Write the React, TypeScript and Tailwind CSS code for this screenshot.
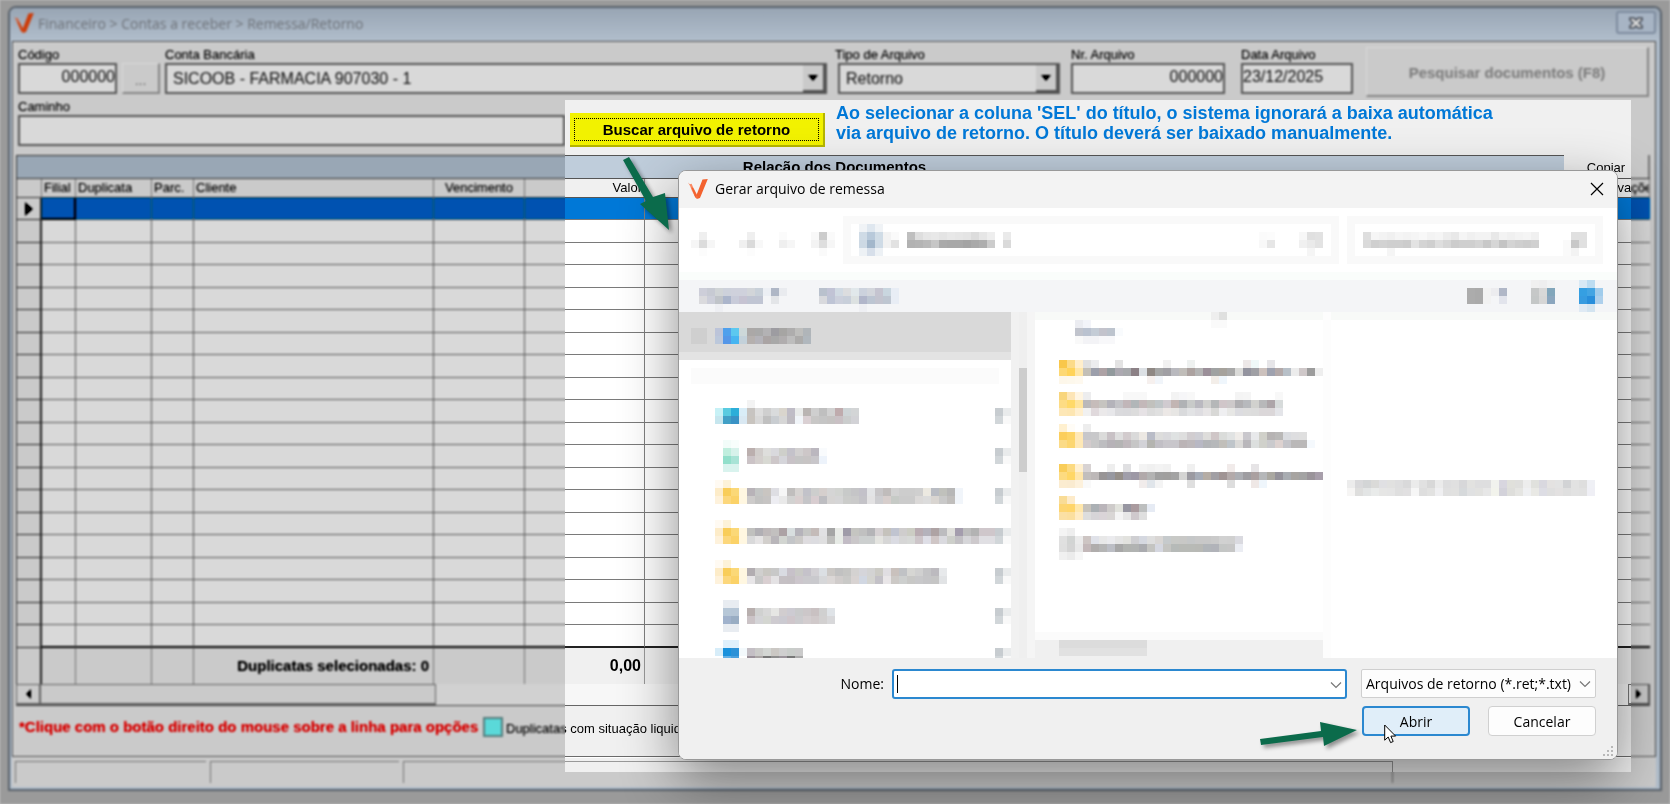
import React from "react";

const UI = "font-['Liberation_Sans',Arial,sans-serif]";
const SEGOE = "font-['Open_Sans','Noto_Sans',sans-serif]";

/* Grid of 8px blocks; "." leaves a block empty. */
function Mosaic({ rows, className = "" }: { rows: string[]; className?: string }) {
  const cells = rows.map((r) => r.split(" "));
  const cols = Math.max(...cells.map((r) => r.length));
  return (
    <svg
      width={cols * 8}
      height={rows.length * 8}
      shapeRendering="crispEdges"
      className={"block shrink-0 " + className}
      aria-hidden="true"
    >
      {cells.map((r, y) =>
        r.map((c, x) =>
          c === "." ? null : <rect key={x + "-" + y} x={x * 8} y={y * 8} width="8" height="8" fill={"#" + c} />
        )
      )}
    </svg>
  );
}

const FOLDER = ["fffaf2 fdf2d8 . .", "fdecc9 f9cd59 fbd877 fff7e1", "fef2dc fcd77c fbd268 fff7e1", ". . . ."];

const SIDE_ITEMS: string[][] = [
  [
    ". . . . f3f3f3",
    "c7f1f6 59cbe0 2caed9 d9edf7 c7c4c1 dddddd cfcfcf d9dbdc d9d5cd bfbcc6 e9ebea b9b4b2 cfcfcf bfbfbf d1d1d1 bfabad ced4d6 d3d5d6",
    "c6e6ee 41a0c6 3a92c5 d9e8f2 c8c4bf d8d8d8 c0c0c0 c9cdd1 d6d6d6 bfbcc2 f1f5f9 dad0d3 c8c7c6 c5c5c5 c5c3c2 c9c0c4 cbcdcd d2d2d6",
    ".",
  ],
  [
    ". f2fcf9 f8fefc",
    ". c0eede d7f2eb . bbafae d1cdcb dededc d9d9dd cecfca c4c2ca d2d0d0 cdc7c8 bbb7bf f9fbfd",
    ". 92dfcb a8e3d6 . cbc3c6 d4cfcd d8d9d3 cdc7c9 d5d5da c8c2c7 c5c5c5 c7c4c4 c8c6ca edf3fb",
    ". d9f3ee d9f3ee",
  ],
  [
    FOLDER[0],
    FOLDER[1] + " b8b3b8 c3c5c4 c9c5c1 dedee3 f6f6f6 c0bebd d6d3d1 c2c2c9 cdcecd d5cfcd d5d5d5 d2d4d1 c8cac9 c5c5c7 c3c1c9 e3e4e6 c8c6c8 c0bcbb d2d2d2 cdcdcd cdcdcd cfcfcf ece9e1 b9bcc3 c0c1bc b7b7b7 f1f5fa",
    FOLDER[2] + " cdcbca c2c2c1 c6c4c3 ededf2 e9e9e9 d2d2d1 d9cfcf c5c5c8 d8cdd0 bdbdc1 d6d4d3 d5d5d6 cbccca cacaca c4c3c8 e3e2e3 cdcdd0 d7cecc c6cac6 cbcbcb cbcbcb dbd9d8 dcdcdc d9d5d1 c9c9c9 c0bebc f1f5fa",
    ".",
  ],
  [
    FOLDER[0],
    FOLDER[1] + " c0c0be b1afb4 bfb9ba c2c0bf aca2a5 d8dedf b5b3ba c5c6c4 c4bbb9 e1e1e3 a5a5a5 e9ebe7 9f9ba8 c5c5c1 c0c0c0 b4b4b7 d6d1d3 c5c2bc c0c4d0 cfcdcd cccdc4 b9acb2 b4b2bb aea3a4 bcbcbf dfdfdb a49dad bdbdbd b3b3b3 cfc7cb cfc7cb",
    FOLDER[2] + " d9d9da e6e4e5 d2cfcc b9b6ba d2d5d1 c3c5c8 cccac8 dedcdf dcdce0 dfdfe0 bfbfbd e7ebe6 c2bcc5 cac7c9 cccfcf cccfcf e4e4e0 d6d6d6 dadbe2 d6d6d6 d7d9d7 cdc5c9 dedee6 cfc6c6 dadadf cdcfca c2c0c4 d6d6d9 cdc9cc e0dfe3 e0dfe3",
    ".",
  ],
  [
    FOLDER[0],
    FOLDER[1] + " b2adb1 d0cfce c9c7c2 c8c8c8 d9dbe2 c7c1c9 c9c9c6 c5c2ca d2d0d4 dbdfe3 cbc8c5 c1c1c1 c5c5c3 d4d2d1 d5d5da d3d3d3 cccbc5 e0dee2 c9c1bd c0c2c5 d6d6d3 d0d0d0 c4c4c6 bcbabf e7e9eb",
    FOLDER[2] + " e8e6e8 c8c8c8 d9cfd1 e4e2e4 c5c0c4 c4bfc3 ccc6cc cac9cd c9c9cd d6d7d9 dbd7d6 d0cccb c9c9c7 d8d3d2 d1d7e2 d4d4d0 c3c1c7 e9e6e8 ccc9c6 cdcfce c8c8c6 c8c8ca c5c5c7 c5c5c5 e1e3e5",
    ".",
  ],
  [
    ". e8ecf1 e8ecf1",
    ". b6c7d7 b6c6d6 . b8afae d0d1d0 d8d8d8 e6e6e4 d1cdcf cdcbd2 c9cacb ccc7c9 c9c1c2 d0d0d0 dfe3e7",
    ". a0b2cc 99adc3 . cbc3c6 d4d4d7 d4d6d1 cecbd0 cbcad1 cfc6cb cbcbce d3cdcf d0c9ca d2d0d0 d8d8da",
    ". e8ecf1 e8ecf1",
  ],
  [
    ". dff0fc dff0fc",
    "d7edf9 1991dc 2c91d7 f3f9fc c4bfc5 cbcbc9 d3d6d3 cbc8c4 cfcfcf c9cdca cbcbcb",
    ". 62b0e6 4aa0de . 999099 aaa5a5 777777 8e8e8e 9b949b 777777 aaaaaa",
    ".",
  ],
];

const PIN = [". .", ". c7ccd0 e9ebec", ". d1d6d9 f9f9f9", "."];

const F1 = ["f9c74a fcdb88 ffeecb", "fdd874 ffd35a ffe6a6", "fdf7ea fdf8ec fef9ef"];
const F2 = ["f8d57c fde5b6 fff5e2", "fddc84 ffd969 ffe49c", "fde7b6 fde6b2 ffefcf"];
const F3 = ["fff0cf fffcf6 .", "fcce5b fdd467 ffe8b6", "fbdb87 fcd671 ffe8b6"];

const FILES: string[][] = [
  [
    F1[0] + " e0e0e0 ececee . . e3e3e3 . . . . . f1f1f1 . . eef1f0 . . . . . . ede8e8 eff8f8 . e6e5e8 . . . . . . e4e0e2 e1e2e6 .",
    F1[1] + " c3bfb7 9c9fab ada2a5 929a9d aca9b1 a7a9ac 8c8186 dce0e4 8f8884 a5a6a6 a09fa4 b9b9be c0bdb9 aca2a0 b4b4b4 9b8f99 a0a2a2 a6a29c a8a8a8 dadad8 94949f a0a0a5 ccc1bd 9fa2af b3a9a9 b8c0c8 ececec cfc8c9 9c9c9c eeeeee",
    F1[2] + " . . . . . . . . f6f0ee f1f5fa . . . . . . f3eee9 eff6fc",
  ],
  [".", F2[0] + " ededee . . . . f8f8f8 f8f8f8 f8f8f8 . . . f3f3f3 f6f6f8 f8f8f8 . . . . . f4f4f4 f5f5f5 . . . f8f8f8",
    F2[1] + " bab8ba c6bcba c6c4c0 b4b3ba c3c3c7 c1b6b9 b1b6b8 c3b8b9 c1c1bd c0c6c8 d0cbd0 c2b5b3 b0b2b5 c8cac9 bab9c0 d0d0ce b5b7b8 d0c6c9 cdc9ca b0afb2 b7b9bd d1d1ce b8b8ba ada5a9 d7dbdb",
    F2[2] + " f1f1f1 e0d9dc ebe9ea e7e7ea dadadd d9d9dc dcdcdc e6e2e5 dcdcdc e0e0e0 ece8e6 e7e6e4 d9dadc e2e3e5 dedde1 e7e5e6 d8d8d6 efeff1 e7e7e5 dcdce0 dddddd dcdcdc dbd7d9 dbd7d9 e4e5e9"],
  [".", F3[0] + " ededed",
    F3[1] + " c7c7ca c8c8ca dbdbda c8c1c5 dedede d2cbcd dadada ece8e3 b9bcc7 dddddc dadadd dfe2e2 dedede d1cdd0 cfcfd5 dedddb cfc6c7 dadcda e1e3e3 efece9 c9c7cc e8e9eb d0d0c9 b6b3b3 b9b8b7 dadce0 dedee0 dfdfdf",
    F3[2] + " d3cbcc c8c8c8 bdbdc0 b6b2b7 b4b4b4 bfb8bc c6c6c6 d2d2d7 b4b4b0 c1bfc5 c8c6cb c8c6cb bbb4b6 bdb8bb b8b8c4 b3b5b8 b6b8ba c1bfba bfc5ca dbdad8 b9b7bb dcdfde d0d1cb cacacd ddd2d0 c5c5ca bab8b8 bab8b8 f5f9fd"],
  [".", ".",
    "f9cd59 fcda80 fff0d0 d8d3d3 . . eeeeee . e0e0e2 . f3f3f3 f0f0f0 f3f3f3 f1f1f1 . . f0f0f0 . . . . f1ebea . . e6e4e6 . . . . . . . . e7e0e2",
    "fddb80 ffd766 ffe6aa c2bebc bdb8b8 989596 9798a0 958f89 a09eaa 9d98a5 b1a9aa b3b3b3 a0a0a0 a09f9e a3a3a3 d4d4d3 9b9aa1 a6acb7 b5ada5 a19fa4 a09494 b3aaaa acaeb3 9e9da1 aaa0a0 b5b7b9 aaa8a1 94929a a8acb1 a7a4a1 a3a3a3 9a949a a79eaa ebf7fb",
    "fbecd0 faebd0 fdf1dc f9f9f9 . . . . . . f1eceb e0e5ea f4f4f4 . . . dfdfdf . . . . dddddd . . efe8e6 eff6fc"],
  [".",
    "f9dc96 fdebca .",
    "fdd571 ffd56a ffe7ab c6c2bb abb0b4 bab5ba cecbca e1e2dc 9796a1 aa9b9f bdbfbf e6ebf4",
    "fbe0a4 fbdf9f ffebc3 dddddd d7d5d8 dad4d8 d9d6d5 f4f4f4 e7e7e7 cfc9cd dfdfdf"],
  [".",
    "f4f4f4 eeeeee .",
    "e0e0e0 d2d4d3 ebebeb cdc5c3 e0e2e9 e8e8e8 ebebee e5e5e5 e2e2de cfcfd2 d5d8e0 dedede d9d6d4 c6cacc c8c9c6 c8c8c6 c5c7c8 c8c8c8 c8c8c8 cacaca d1d1d1 d0d0d0 dadae0",
    "dfdfdf d4d4d4 e8e8e8 c3b8b9 b0adac b5b5b5 bcbec5 a7a7a7 b1b3b0 b1b3b2 aaabaf c4c4c1 d5d7e0 c5c5c2 b6bab8 b8bab6 b8bab6 b8b9b5 b1b5b9 b1b3b9 c4c6c5 c6c6c6 ebedf3",
    "f0f0f0 ebebeb f6f6f6"],
];

const PREVIEW = [
  "ececec d9d9db d3d5d6 dadad8 e0e0e3 e1e1e0 dededf d9d9da ebebeb e1e1e1 d8d8d8 ebebeb dededf e0e0e0 d7d7d9 e2e2e0 dededf dededf f1f2ee d8d6df e0e0db dfdfdd ededed e0e1dd d9d8df e4e2e1 e3e3e3 d2d3d5 e2e2e2 dedede eff0f5",
  "f6f5f4 dededd e3e5e5 e9ebea e6e6e5 e5e5e5 dfdfdf e1e0e1 f6f6f6 dedede e2e2e1 efeff1 e0e0e0 e1e1e0 d6d9db e0e1e2 e2e2e0 e7e7e7 f2f3ec d3d2da dededb e5e5e2 eff0f2 e9e9e5 dddde4 dfdfdf e3e1e1 dfdfdf e2e2e2 e1e1e1 efeff5",
];

function Logo({ className = "" }: { className?: string }) {
  return (
    <svg viewBox="0 0 20 20" width="20" height="20" className={"shrink-0 " + className} aria-hidden="true">
      <path d="M14.5 .6 19.8 0 12.2 18.6C11.6 19.8 8.6 20.4 7.6 18.8L6.6 16.6 8.8 15.2Z" fill="#f3622f" />
      <path d="M0 3.4 1.8 5.2 3.6 4.8 5 8 8.8 15.2 9.4 18.4 7.2 18.2 3.6 11 2.2 7.2Z" fill="#f98a64" />
      <path d="M3.4 8.4 5 8.8 9 16.4 8.2 18.8 6.8 17.2Z" fill="#f3622f" />
    </svg>
  );
}

function Label({ htmlFor, children }: { htmlFor: string; children: React.ReactNode }) {
  return (
    <label htmlFor={htmlFor} className="block h-4 whitespace-nowrap text-[13px] leading-4">
      {children}
    </label>
  );
}

function Combo({ id, value }: { id: string; value: string }) {
  return (
    <div className="relative h-[31px] border-2 border-[#7a7a7a] bg-white">
      <select id={id} className="h-full w-full appearance-none bg-transparent pl-1.5 text-base text-[#333] outline-none">
        <option>{value}</option>
      </select>
      <span className="pointer-events-none absolute inset-y-0 right-0 flex w-[22px] items-center justify-center border-b-2 border-r-2 border-[#777] bg-[#f0f0f0]">
        <svg width="10" height="6" aria-hidden="true">
          <path d="M0 0H10L5 6Z" fill="#000" />
        </svg>
      </span>
    </div>
  );
}

const INPUT = "block h-[31px] w-full min-w-0 border-2 border-[#7a7a7a] bg-white text-base text-[#333] outline-none";

function Chevron({ className = "" }: { className?: string }) {
  return (
    <svg width="12" height="8" viewBox="0 0 12 8" className={className} aria-hidden="true">
      <path d="M1 1.5 6 6.5 11 1.5" fill="none" stroke="#777" strokeWidth="1.2" />
    </svg>
  );
}

const ROWS = Array.from({ length: 20 }, (_, i) => i);
const DATA_COLS = [0, 1, 2, 3, 4, 5, 6, 7];

function DocumentGrid() {
  const base =
    "h-[19px] overflow-hidden whitespace-nowrap border-b border-r border-b-[#555] border-r-[#999] px-[2px] text-[13px] font-normal leading-[18px] ";
  const th = base + "text-left";
  return (
    <table className="w-full table-fixed border-separate border-spacing-0 border-l border-[#555]">
      <colgroup>
        <col className="w-[25px]" />
        <col className="w-[34px]" />
        <col className="w-[76px]" />
        <col className="w-[42px]" />
        <col className="w-[240px]" />
        <col className="w-[91px]" />
        <col className="w-[120px]" />
        <col />
        <col className="w-[70px]" />
      </colgroup>
      <thead>
        <tr>
          <th className={th} />
          <th className={th}>Filial</th>
          <th className={th}>Duplicata</th>
          <th className={th}>Parc.</th>
          <th className={th}>Cliente</th>
          <th className={base + "text-center"}>Vencimento</th>
          <th className={base + "text-right"}>Valor</th>
          <th className={th} />
          <th className={th}>Observações</th>
        </tr>
      </thead>
      <tbody>
        {ROWS.map((r) => (
          <tr key={r} className={r % 2 ? "h-[23px]" : "h-[22px]"}>
            <td className="border-b border-r-2 border-[#444] bg-[#f0f0f0] p-0">
              {r === 0 && (
                <svg width="8" height="14" className="mx-auto block" aria-label="Linha atual">
                  <path d="M0 0 8 7 0 14Z" fill="#000" />
                </svg>
              )}
            </td>
            {DATA_COLS.map((c) => (
              <td
                key={c}
                className={
                  "p-0 " +
                  (r === 0 && c === 0
                    ? "border-b-2 border-r-2 border-[#111] bg-[#0078d7]"
                    : (c < 6 ? "border-r border-r-[#808080] " : "") +
                      (r === 19 ? "border-b-2 border-b-[#222] " : "border-b border-b-[#7a7a7a] ") +
                      (r === 0 ? "bg-[#0078d7]" : "bg-white"))
                }
              />
            ))}
          </tr>
        ))}
      </tbody>
      <tfoot>
        <tr className="h-9 text-[15px] font-bold">
          <td className="border-r-2 border-[#444] p-0" />
          <td className="border-r border-[#999]" />
          <td className="border-r border-[#999]" />
          <td className="border-r border-[#999]" />
          <td className="whitespace-nowrap border-r border-[#999] p-0 pr-1 text-right">Duplicatas selecionadas: 0</td>
          <td className="border-r border-[#999]" />
          <td className="border-r border-[#999] p-0 pr-[3px] text-right text-base">0,00</td>
          <td />
          <td />
        </tr>
      </tfoot>
    </table>
  );
}

function MainWindow() {
  return (
    <div className="flex flex-col rounded-t-lg border-2 border-[#7d8690] bg-[#d7e4f2] pb-[2px] pl-[2px] pr-1">
      <header className="-ml-[2px] -mr-1 flex h-[33px] items-center gap-1 rounded-t-md bg-linear-to-b from-[#becbda] to-[#d7e4f2] pl-1 pr-1">
        <Logo className="-mt-1" />
        <h1 className={"min-w-0 flex-1 truncate pb-0.5 text-[14px] font-medium text-[#93989f] " + SEGOE}>
          Financeiro &gt; Contas a receber &gt; Remessa/Retorno
        </h1>
        <button
          type="button"
          aria-label="Fechar janela"
          className="-mt-1 flex h-[23px] w-10 items-center justify-center rounded-[3px] border-2 border-[#a3b1c4] bg-[#cddaea]"
        >
          <svg width="14" height="12" viewBox="0 0 14 12" aria-hidden="true">
            <path d="M1 1H5L7 3 9 1H13V3L10 6 13 9V11H9L7 9 5 11H1V9L4 6 1 3Z" fill="#fff" stroke="#6b717c" strokeWidth="1.6" />
          </svg>
        </button>
      </header>

      <main className="border border-[#6b6b6b] bg-[#f0f0f0] pl-[3px] pr-[5px] shadow-[inset_1px_1px_0_#fff]">
        <form className="flex pl-[2px] pr-px pt-[5px]" onSubmit={(e) => e.preventDefault()}>
          <div className="w-[99px]">
            <Label htmlFor="codigo">Código</Label>
            <input id="codigo" className={INPUT + " pb-1 text-right"} defaultValue="000000" />
          </div>
          <button type="button" className="ml-[5px] mt-4 h-[31px] w-[38px] border border-b-2 border-r-2 border-[#fff] border-b-[#aaa] border-r-[#aaa] pt-1 text-sm text-[#888]">
            ...
          </button>
          <div className="ml-[5px] min-w-0 flex-1">
            <Label htmlFor="conta">Conta Bancária</Label>
            <Combo id="conta" value="SICOOB - FARMACIA 907030 - 1" />
          </div>
          <div className="ml-2 w-[225px]">
            <Label htmlFor="tipo">Tipo de Arquivo</Label>
            <div className="pl-[3px]">
              <Combo id="tipo" value="Retorno" />
            </div>
          </div>
          <div className="ml-[11px] w-[154px]">
            <Label htmlFor="nr">Nr. Arquivo</Label>
            <input id="nr" className={INPUT + " pb-1 text-right"} defaultValue="000000" />
          </div>
          <div className="ml-4 w-[112px]">
            <Label htmlFor="data">Data Arquivo</Label>
            <input id="data" className={INPUT + " pb-1"} defaultValue="23/12/2025" />
          </div>
          <button
            type="button"
            className="ml-[13px] h-[50px] w-[283px] border border-b-2 border-r-2 border-[#fff] border-b-[#aaa] border-r-[#aaa] pt-1 text-[15px] font-bold text-[#a0a0a0]"
          >
            Pesquisar documentos (F8)
          </button>
        </form>

        <div className="flex pl-[2px]">
          <div className="w-[547px] pt-[2px]">
            <Label htmlFor="caminho">Caminho</Label>
            <input id="caminho" className={INPUT} />
          </div>
          <button
            type="button"
            className="ml-[5px] mt-4 h-[34px] w-[255px] border-b-2 border-r-2 border-[#b5b500] bg-[#f2f200] p-1 pt-[5px] text-[15px] font-bold"
          >
            <span className="flex h-full items-center justify-center border border-dotted border-black pt-0.5">
              Buscar arquivo de retorno
            </span>
          </button>
          <p className="ml-[11px] mt-[6px] whitespace-nowrap text-[18px] font-bold leading-5 text-[#0078d7]">
            Ao selecionar a coluna 'SEL' do título, o sistema ignorará a baixa automática
            <br />
            via arquivo de retorno. O título deverá ser baixado manualmente.
          </p>
        </div>

        <section className="mt-2">
          <div className="flex h-6 items-center border-b border-[#555]">
            <h2 className="h-full flex-1 border-l border-t border-[#555] bg-[#bfcddb] pl-[88px] text-center text-[15px] font-bold leading-[22px]">
              Relação dos Documentos
            </h2>
            <button type="button" className="h-full w-[86px] border-r-2 border-[#999] pt-0.5 text-[13px]">
              Copiar
            </button>
          </div>
          <DocumentGrid />
          <div className="flex h-[22px] border-b border-[#666] bg-[#f7f7f7]">
            <button type="button" aria-label="Rolar para a esquerda" className="flex w-6 items-center justify-center border border-b-2 border-[#888] bg-[#f0f0f0]">
              <svg width="5" height="10" aria-hidden="true">
                <path d="M5 0V10L0 5Z" />
              </svg>
            </button>
            <div className="w-[396px] border border-b-2 border-[#888] bg-[#f0f0f0]" />
            <div className="flex-1" />
            <button type="button" aria-label="Rolar para a direita" className="flex w-[22px] items-center justify-center border border-b-2 border-r-2 border-[#777] bg-[#f0f0f0]">
              <svg width="5" height="10" aria-hidden="true">
                <path d="M0 0V10L5 5Z" />
              </svg>
            </button>
          </div>
        </section>

        <div className="flex h-[50px] items-start pl-[3px] pt-[11px]">
          <strong className="w-[464px] whitespace-nowrap text-[15px] leading-5 text-[#ff0000]">
            *Clique com o botão direito do mouse sobre a linha para opções
          </strong>
          <span className="h-5 w-5 shrink-0 border-2 border-[#7aa3a3] bg-[#80ffff]" />
          <span className="ml-[3px] mt-1 whitespace-nowrap text-[13px] leading-4">Duplicatas com situação liquidada</span>
        </div>
      </main>

      <footer className="flex h-[30px] gap-1 bg-[#f0f0f0] px-[3px] pb-1 pt-1 shadow-[inset_0_1px_0_#fff]">
        <div className="w-[191px] border-l border-t border-[#999]" />
        <div className="w-[189px] border-l border-t border-[#999]" />
        <div className="flex-1 border-l border-r border-t border-[#999]" />
        <div className="w-[256px]" />
      </footer>
    </div>
  );
}

/* Dims and softens everything around the highlighted area. */
function Spotlight() {
  return (
    <div className="pointer-events-none absolute inset-0 [backdrop-filter:blur(0.8px)_brightness(0.77)_contrast(1.3)] [clip-path:polygon(0_0,0_100%,565px_100%,565px_100px,calc(100%_-_39px)_100px,calc(100%_-_39px)_calc(100%_-_32px),565px_calc(100%_-_32px),565px_100%,100%_100%,100%_0)]" />
  );
}

function FileDialog() {
  return (
    <div
      role="dialog"
      aria-labelledby="dialog-title"
      className={
        "absolute left-[678px] right-[52px] top-[170px] overflow-hidden rounded-lg border border-[#999] bg-white text-[14px] text-black shadow-[0_20px_56px_rgba(0,0,0,0.45)] " +
        SEGOE
      }
    >
      <header className="flex h-[37px] items-center gap-[7px] bg-[#f3f3f3] pb-0.5 pl-[9px] pr-[13px]">
        <Logo />
        <h2 id="dialog-title" className="flex-1">
          Gerar arquivo de remessa
        </h2>
        <button type="button" aria-label="Fechar">
          <svg width="14" height="14" viewBox="0 0 14 14" aria-hidden="true">
            <path d="M1 1 13 13M13 1 1 13" stroke="#000" strokeWidth="1.2" />
          </svg>
        </button>
      </header>

      <div className="flex h-16 items-start pl-3 pt-2">
        <button type="button" aria-label="Voltar" className="mt-4">
          <Mosaic rows={[". efefef .", "f6f6f6 dcdcdc f6f6f6", ". fcfcfc ."]} />
        </button>
        <button type="button" aria-label="Avançar" className="ml-6 mt-4">
          <Mosaic rows={[". efefef .", "f0f0f0 dadada f8f8f8", ". fcfcfc ."]} />
        </button>
        <button type="button" aria-label="Locais recentes" className="ml-4 mt-4">
          <Mosaic rows={["fbfbfb .", "efefef f6f6f6"]} />
        </button>
        <button type="button" aria-label="Acima" className="ml-4 mt-4">
          <Mosaic rows={["f8f8f8 cccccc fafafa", "f3f3f3 dedede f6f6f6", ". fafafa ."]} />
        </button>
        <div className="ml-2 flex h-12 flex-1 border-8 border-[#f9f9f9] bg-white pl-2 pr-2">
          <Mosaic
            rows={[
              "f0f3f6 dfe7ef f0f3f6",
              "cfdbe6 b8c9da d0dce6 f3f3f3 fafafa . bfbfbf dedede e6e6e6 e8e8e8 e4e4e4 e8e8e8 e6e6e6 e4e4e4 dcdcdc e6e6e6 eeeeee . eaeaea",
              "cdd9e4 a3b7cb cfdbe6 f2f2f2 e2e2e2 . b2b2b2 b4b4b4 b9b9b9 c6c6c6 aaaaaa a8a8a8 a8a8a8 a4a4a4 a9a9a9 aeaeae cccccc . dadada",
              "edf1f5 d7dfea edf1f5",
            ]}
          />
          <span className="flex-1" />
          <Mosaic
            rows={[
              ".",
              "fbfbfb fcfcfc . . . f7f7f7 e0e0e0 e2e2e2",
              "f8f8f8 e6e6e6 . . . f0f0f0 eaeaea e3e3e3",
              ". . . . . . f5f5f5",
            ]}
          />
        </div>
        <div className="ml-2 mr-[14px] flex h-12 w-64 justify-between border-8 border-[#f9f9f9] bg-white pl-2 pr-2">
          <Mosaic
            rows={[
              ".",
              "dedede f6f6f6 f3f3f3 f0f0f0 f5f5f5 f3f3f3 f5f5f5 f8f8f8 f3f3f3 f5f5f5 ededed e8e8e8 f5f5f5 f0f0f0 f3f3f3 f3f3f3 e8e8e8 f3f3f3 f0f0f0 f3f3f3 f5f5f5 f0f0f0",
              "dadada cfcfcf d2d2d2 cfcfcf cfcfcf cccccc e3e3e3 d4d4d4 cfcfcf dedede d6d6d6 cccccc cfcfcf cfcfcf d4d4d4 c8c8c8 d6d6d6 c4c4c4 d4d4d4 cfcfcf cccccc d0d0d0",
              ". . . f5f5f5",
            ]}
          />
          <Mosaic rows={[".", ". e0e0e0 e0e0e0", "fafafa c8c8c8 e0e0e0", "fafafa f3f3f3 ."]} />
        </div>
      </div>

      <div className="flex h-10 items-start border-t-8 border-[#fafdfb] bg-[#f4f5f7] pl-5 pr-[14px]">
        <button type="button" aria-label="Organizar" className="mt-2">
          <Mosaic
            rows={[
              "cdced9 c7cad3 d0d4d6 cdd1db cfd1dc cfd1dc d2d5d9 c8d0d9 eceff4 afb7c6 e9ebef",
              "dadadd ccced9 c0c4c9 abb5cb c8cbd9 c6c3d2 c0c5d3 c0c5d3 f4f5f7 e3e5e8 .",
              ". . eeeff3",
            ]}
          />
        </button>
        <button type="button" aria-label="Nova pasta" className="ml-8 mt-2">
          <Mosaic
            rows={[
              "b9c1cd c1c3d5 d1dae3 dcdddf e1e8eb ccd2dd d3d6dc c5c4d0 c9d6df e8edf5",
              "d8d9dd bec4d5 ccd0dc c8cfda dce1e1 b1b6ca bcc5d2 c3c4cf bec6d1 e8edf5",
              ". . . . . eeeff3",
            ]}
          />
        </button>
        <span className="flex-1" />
        <button type="button" aria-label="Modo de exibição" className="mt-2">
          <Mosaic rows={["acacac aaaaaa f2f2f2 ececef b0b7c7", "acacac aaaaaa f2f2f2 f4f5f7 e2e4ec"]} />
        </button>
        <button type="button" aria-label="Painel de visualização" className="ml-6">
          <Mosaic rows={["f0f0f0 eeeeef f2f3f4", "c6c8c8 d8d8d8 82a6bb", "c4c7c7 d6d6d6 8ba6be"]} />
        </button>
        <button type="button" aria-label="Ajuda" className="ml-6">
          <Mosaic rows={["d8e9f5 bcdcf1 .", "359fe2 42a4e3 a0ccec", "369be0 288edb aed0ec", "dfeaf4 d3e4f0 ."]} />
        </button>
      </div>

      <div className="flex h-[346px]">
        <nav className="w-[332px] shrink-0 overflow-hidden bg-white">
          <div className="h-12 border-b-8 border-[#e3e3e3] bg-[#d9d9d9] pl-3 pt-4">
            <Mosaic
              rows={[
                "cfcfcf cfcfcf . bcc4d9 4fa0ec 5cc8ef cdd8d9 aba8a7 a9a9a9 b3b2b4 9d9ca1 a6a5a3 aeadad bebebc b0b5b9",
                "cfcfcf cfcfcf . bcc8db 5597e8 47b5f1 c3d1da b5b0ae b4b3b9 aaa4a4 a8a8a8 b0adae bdbdbd acabaa b0b7bd",
              ]}
            />
          </div>
          <div className="mx-3 mb-4 mt-2 h-4 bg-[#fbfbfb]" />
          <ul className="flex flex-col gap-2 pl-9">
            {SIDE_ITEMS.map((rows, i) => (
              <li key={i} className="flex justify-between">
                <div className="-mr-4">
                  <Mosaic rows={rows} />
                </div>
                <Mosaic rows={PIN} />
              </li>
            ))}
          </ul>
        </nav>
        <div className="w-6 shrink-0 border-x-8 border-l-[#f1f1f1] border-r-[#f5f5f5] bg-[#efefef] pt-14">
          <div className="h-[104px] bg-[#cdcdcd]" />
        </div>
        <section className="flex w-72 flex-col overflow-hidden">
          <div className="flex h-10 items-start border-t-8 border-[#f8faf8] pl-10">
            <Mosaic rows={["ebecf1 f3f4f9 .", "c1c4cd bac2d0 c4ccd6 c3c3cc bdc4ce f9fbfd", "f9f9f9 f3f3f6 f3f3f6 f8f8fa f8f8fa"]} />
            <div className="-mt-2 ml-[88px]">
              <Mosaic rows={["eeeeee dfe0df", "fafafa fafafa"]} />
            </div>
          </div>
          <ul className="mt-2 h-[272px] pl-6">
            {FILES.map((rows, i) => (
              <li key={i}>
                <Mosaic rows={rows} />
              </li>
            ))}
          </ul>
          <div className="h-6 shrink-0 border-t-8 border-[#fbfbfb] bg-[#f0f0f0] pl-6">
            <div className="h-4 w-[88px] border-b-8 border-[#e1e1e1] bg-[#dcdcdc]" />
          </div>
          <div className="h-[2px] shrink-0 bg-[#f0f0f0]" />
        </section>
        <section className="flex-1 border-l-8 border-[#fdfdfd]">
          <div className="h-2 bg-[#f8faf8]" />
          <div className="pl-4 pt-40">
            <Mosaic rows={PREVIEW} />
          </div>
        </section>
      </div>

      <form className="bg-[#f0f0f0] pb-[23px] pr-[21px] pt-[11px]" onSubmit={(e) => e.preventDefault()}>
        <div className="flex items-start">
          <label htmlFor="nome" className="w-[213px] pr-2 text-right leading-[30px]">
            Nome:
          </label>
          <div className="relative flex-1">
            <input id="nome" className="block h-[30px] w-full rounded-[3px] border-2 border-[#2b88d0] bg-white px-1 outline-none" />
            <span className="absolute left-[5px] top-[6px] h-[18px] w-px bg-black" />
            <Chevron className="absolute right-[5px] top-3" />
          </div>
          <div className="relative ml-[14px] w-[235px]">
            <select
              aria-label="Tipo de arquivo"
              className="block h-[29px] w-full appearance-none rounded-[2px] border border-[#cfcfcf] bg-[#fdfdfd] pl-1 outline-none"
            >
              <option>Arquivos de retorno (*.ret;*.txt)</option>
            </select>
            <Chevron className="absolute right-[5px] top-[11px]" />
          </div>
        </div>
        <div className="mt-[7px] flex justify-end gap-[18px]">
          <button type="button" className="h-[30px] w-[108px] rounded-[4px] border-2 border-[#2b88d0] bg-[#e0eef9]">
            Abrir
          </button>
          <button type="button" className="h-[30px] w-[108px] rounded-[4px] border border-[#d0d0d0] bg-[#fdfdfd]">
            Cancelar
          </button>
        </div>
      </form>
      <svg width="11" height="11" className="absolute bottom-[2px] right-[3px]" fill="#b8b8b8" aria-hidden="true">
        <path d="M8 0h2v2h-2zM8 4h2v2h-2zM8 8h2v2h-2zM4 4h2v2h-2zM4 8h2v2h-2zM0 8h2v2h-2z" />
      </svg>
    </div>
  );
}

export default function App() {
  return (
    <div className={"relative min-h-screen overflow-hidden bg-[#c0c0c0] px-2 pb-3 pt-[6px] text-black " + UI}>
      <MainWindow />
      <Spotlight />
      <FileDialog />
      <svg
        width="48"
        height="76"
        className="pointer-events-none absolute left-[622px] top-[156px] overflow-visible drop-shadow-[3px_3px_2px_rgba(0,0,0,0.4)]"
        aria-hidden="true"
      >
        <path d="M1 4 7 1 31 41 43 37 47 74 18 48 24 45Z" fill="#0b6b4b" />
      </svg>
      <svg
        width="98"
        height="28"
        className="pointer-events-none absolute left-[1260px] top-[720px] overflow-visible drop-shadow-[3px_3px_2px_rgba(0,0,0,0.4)]"
        aria-hidden="true"
      >
        <path d="M0 19 61 11 60 2 97 10 64 26 63 17 1 25Z" fill="#0b6b4b" />
      </svg>
      <svg width="13" height="20" className="pointer-events-none absolute left-[1384px] top-[724px]" aria-hidden="true">
        <path d="M.7 1V16.2L4.2 13 6.6 18.6 9.2 17.5 6.9 12.1H11.6Z" fill="#fff" stroke="#000" />
      </svg>
    </div>
  );
}
